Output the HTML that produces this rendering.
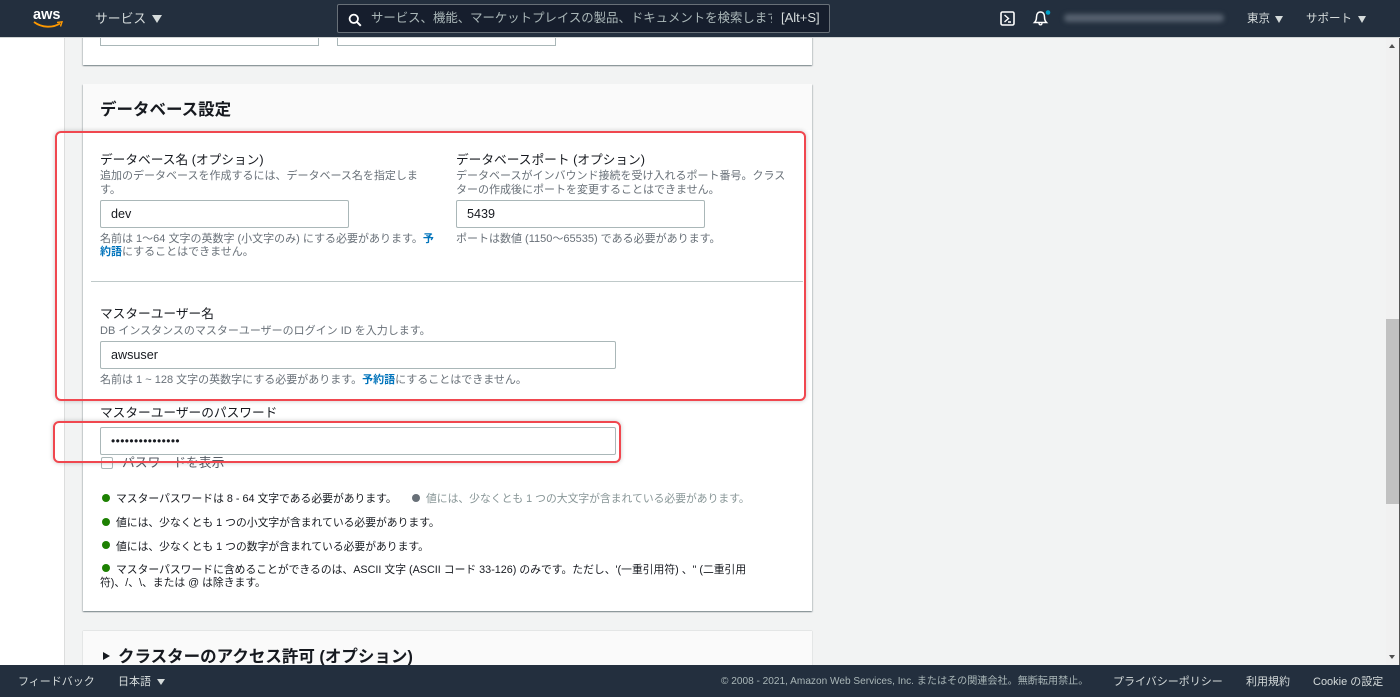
<!DOCTYPE html>
<html lang="ja"><head><meta charset="utf-8"><style>
html,body{margin:0;padding:0}
body{width:1400px;height:697px;overflow:hidden;position:relative;background:#f2f3f3;font-family:"Liberation Sans","Noto Sans CJK JP",sans-serif}
div,span.a,svg.a{position:absolute}
.t{white-space:nowrap;line-height:14px}
.l{font-size:12.7px;color:#16191f;line-height:16px}
.d{font-size:11px;color:#687078}
.p{font-size:10.8px;color:#16191f}
.i{background:#fff;border:1px solid #aab7b8;border-radius:2px;box-sizing:border-box;font-size:12.6px;color:#16191f;line-height:26px;padding-left:10px}
.card{background:#fff;box-shadow:0 1px 1px 0 rgba(0,28,36,.3),1px 1px 1px 0 rgba(0,28,36,.15),-1px 1px 1px 0 rgba(0,28,36,.15)}
.h{background:#fafafa}
.red{border:2px solid #f0474f;border-radius:6px;box-sizing:border-box;box-shadow:0 0 5px rgba(0,0,0,.22)}
.w{color:#d5dbdb;font-size:12.8px}
.dot{width:8px;height:8px;border-radius:50%;background:#1d8102}
.tri{width:0;height:0;border-left:4px solid transparent;border-right:4px solid transparent;border-top:7px solid #d5dbdb}
a{color:#0073bb;font-weight:bold;text-decoration:none}
</style></head><body>
<div style="left:0;top:0;width:64px;height:697px;background:#fff"></div>
<div style="left:64px;top:0;width:1px;height:697px;background:#dcdddd"></div>

<div class="card" style="left:83px;top:20px;width:729px;height:45px"></div>
<div style="left:100px;top:20px;width:219px;height:26px;background:#fff;border:1px solid #aab7b8;box-sizing:border-box"></div>
<div style="left:337px;top:20px;width:219px;height:26px;background:#fff;border:1px solid #aab7b8;box-sizing:border-box"></div>

<div class="card" style="left:83px;top:84px;width:729px;height:527px"></div>
<div class="h" style="left:83px;top:84px;width:729px;height:46px"></div>
<div class="t" style="left:100px;top:101px;font-size:16.5px;font-weight:bold;color:#16191f;line-height:18px">データベース設定</div>

<div class="t l" style="left:100px;top:152px">データベース名 (オプション)</div>
<div class="t d" style="left:100px;top:169px">追加のデータベースを作成するには、データベース名を指定しま</div>
<div class="t d" style="left:100px;top:183px">す。</div>
<div class="i" style="left:100px;top:200px;width:249px;height:28px">dev</div>
<div class="t d" style="left:100px;top:232px">名前は 1～64 文字の英数字 (小文字のみ) にする必要があります。<a>予</a></div>
<div class="t d" style="left:100px;top:245px"><a>約語</a>にすることはできません。</div>

<div class="t l" style="left:456px;top:152px">データベースポート (オプション)</div>
<div class="t d" style="left:456px;top:169px">データベースがインバウンド接続を受け入れるポート番号。クラス</div>
<div class="t d" style="left:456px;top:183px">ターの作成後にポートを変更することはできません。</div>
<div class="i" style="left:456px;top:200px;width:249px;height:28px">5439</div>
<div class="t d" style="left:456px;top:232px">ポートは数値 (1150～65535) である必要があります。</div>

<div style="left:91px;top:281px;width:712px;height:1px;background:#bfc9c9"></div>

<div class="t l" style="left:100px;top:306px">マスターユーザー名</div>
<div class="t d" style="left:100px;top:324px">DB インスタンスのマスターユーザーのログイン ID を入力します。</div>
<div class="i" style="left:100px;top:341px;width:516px;height:28px">awsuser</div>
<div class="t d" style="left:100px;top:373px">名前は 1 ~ 128 文字の英数字にする必要があります。<a>予約語</a>にすることはできません。</div>

<div class="t l" style="left:100px;top:405px">マスターユーザーのパスワード</div>
<div class="i" style="left:100px;top:427px;width:516px;height:28px;font-size:12px;letter-spacing:.4px">•••••••••••••••</div>
<div style="left:101px;top:457px;width:12px;height:12px;border:1px solid #aab7b8;border-radius:2px;box-sizing:border-box;background:#fff"></div>
<div class="t" style="left:122px;top:456px;font-size:12.8px;color:#545b64">パスワードを表示</div>

<div class="dot" style="left:102px;top:494px"></div>
<div class="t p" style="left:116px;top:492px">マスターパスワードは 8 - 64 文字である必要があります。</div>
<div class="dot" style="left:412px;top:494px;background:#687078"></div>
<div class="t p" style="left:426px;top:492px;color:#879596">値には、少なくとも 1 つの大文字が含まれている必要があります。</div>
<div class="dot" style="left:102px;top:518px"></div>
<div class="t p" style="left:116px;top:516px">値には、少なくとも 1 つの小文字が含まれている必要があります。</div>
<div class="dot" style="left:102px;top:541px"></div>
<div class="t p" style="left:116px;top:540px">値には、少なくとも 1 つの数字が含まれている必要があります。</div>
<div class="dot" style="left:102px;top:564px"></div>
<div class="t p" style="left:116px;top:563px">マスターパスワードに含めることができるのは、ASCII 文字 (ASCII コード 33-126) のみです。ただし、'(一重引用符) 、" (二重引用</div>
<div class="t p" style="left:100px;top:576px">符)、/、\、または @ は除きます。</div>

<div class="h" style="left:83px;top:631px;width:729px;height:40px;box-shadow:0 0 1px rgba(0,28,36,.3)"></div>
<div style="left:103px;top:652px;width:0;height:0;border-left:7px solid #16191f;border-top:4.5px solid transparent;border-bottom:4.5px solid transparent"></div>
<div class="t" style="left:118px;top:647px;font-size:16.5px;font-weight:bold;color:#16191f;line-height:20px">クラスターのアクセス許可 (オプション)</div>

<div class="red" style="left:55px;top:131px;width:751px;height:270px"></div>
<div class="red" style="left:53px;top:421px;width:568px;height:42px"></div>

<!-- scrollbar -->
<div style="left:1386px;top:38px;width:13px;height:627px;background:#f1f1f1"></div>
<div style="left:1386px;top:319px;width:13px;height:185px;background:#c1c1c1"></div>
<div style="left:1399px;top:38px;width:1px;height:627px;background:#555"></div>
<div style="left:1389px;top:44px;width:0;height:0;border-left:3.5px solid transparent;border-right:3.5px solid transparent;border-bottom:4px solid #505050"></div>
<div style="left:1389px;top:655px;width:0;height:0;border-left:3.5px solid transparent;border-right:3.5px solid transparent;border-top:4px solid #505050"></div>

<!-- header -->
<div style="left:0;top:0;width:1400px;height:37px;background:#232f3e;border-bottom:1px solid #cfd3d3"></div>
<div class="t" style="left:33px;top:7px;font-size:14.5px;font-weight:bold;color:#fff;line-height:17px;letter-spacing:0">aws</div>
<svg class="a" style="left:33px;top:20px" width="32" height="10" viewBox="0 0 32 10"><path d="M1 2 C9 8 20 8 27 3.5" fill="none" stroke="#f90" stroke-width="1.8"/><path d="M24 2.5 L29 1.8 L27.5 6.5" fill="none" stroke="#f90" stroke-width="1.4"/></svg>
<div class="t w" style="left:95px;top:12px">サービス</div>
<div class="tri" style="left:152px;top:15px;border-left-width:5px;border-right-width:5px;border-top-width:8px"></div>
<div style="left:337px;top:4px;width:493px;height:29px;background:#161e2d;border:1px solid #687078;border-radius:2px;box-sizing:border-box"></div>
<svg class="a" style="left:348px;top:13px" width="14" height="14" viewBox="0 0 14 14"><circle cx="5.8" cy="5.8" r="4.2" fill="none" stroke="#fff" stroke-width="1.8"/><path d="M8.8 8.8 L12.8 12.8" stroke="#fff" stroke-width="2"/></svg>
<div class="t" style="left:371px;top:11px;width:401px;overflow:hidden;font-size:12.4px;color:#aab7b8">サービス、機能、マーケットプレイスの製品、ドキュメントを検索します</div>
<div class="t" style="left:781px;top:11px;font-size:13px;color:#d5dbdb">[Alt+S]</div>
<svg class="a" style="left:1000px;top:11px" width="15" height="15" viewBox="0 0 15 15"><rect x="1" y="1" width="13" height="13" rx="1.5" fill="none" stroke="#fff" stroke-width="1.6"/><path d="M4.5 4 L8.5 7.5 L4.5 11 M8 11 H11" fill="none" stroke="#fff" stroke-width="1.4"/></svg>
<svg class="a" style="left:1032px;top:9px" width="20" height="18" viewBox="0 0 20 18"><path d="M2.5 13.5 C4.5 11.5 4.5 9.5 4.5 8 C4.5 5 6 3 8.5 3 C11 3 12.5 5 12.5 8 C12.5 9.5 12.5 11.5 14.5 13.5 Z" fill="none" stroke="#fff" stroke-width="1.5"/><path d="M7 14 C7 16.5 10 16.5 10 14" fill="none" stroke="#fff" stroke-width="1.3"/><circle cx="16" cy="3.5" r="2.3" fill="#00a1c9"/></svg>
<div style="left:1064px;top:14px;width:160px;height:8px;border-radius:4px;background:#56616f;filter:blur(2.5px)"></div>
<div class="t w" style="left:1247px;top:12px;font-size:11.5px">東京</div>
<div class="tri" style="left:1275px;top:16px"></div>
<div class="t w" style="left:1306px;top:12px;font-size:11.5px">サポート</div>
<div class="tri" style="left:1358px;top:16px"></div>

<!-- footer -->
<div style="left:0;top:665px;width:1400px;height:32px;background:#232f3e"></div>
<div class="t" style="left:18px;top:675px;font-size:11px;color:#d5dbdb">フィードバック</div>
<div class="t" style="left:118px;top:675px;font-size:11px;color:#d5dbdb">日本語</div>
<div class="tri" style="left:157px;top:679px;border-top-width:6px"></div>
<div class="t" style="left:721px;top:675px;font-size:10.1px;color:#aab7b8">© 2008 - 2021, Amazon Web Services, Inc. またはその関連会社。無断転用禁止。</div>
<div class="t" style="left:1113px;top:675px;font-size:11px;color:#d5dbdb">プライバシーポリシー</div>
<div class="t" style="left:1246px;top:675px;font-size:11px;color:#d5dbdb">利用規約</div>
<div class="t" style="left:1313px;top:675px;font-size:11px;color:#d5dbdb">Cookie の設定</div>
</body></html>
